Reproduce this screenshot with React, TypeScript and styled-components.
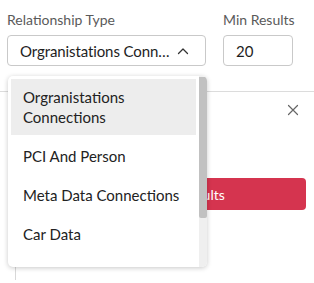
import React from "react";
import styled, { createGlobalStyle } from "styled-components";

const GlobalStyle = createGlobalStyle`
  html, body {
    margin: 0;
    padding: 0;
    background: #ffffff;
    font-family: Lato, "Noto Sans", sans-serif;
    color: #222;
  }
`;

const options = [
  "Orgranistations Connections",
  "PCI And Person",
  "Meta Data Connections",
  "Car Data",
];

const ChevronUp = () => (
  <svg width="14" height="14" viewBox="0 0 14 14" fill="none">
    <path d="M2.5 9.5 L7 5 L11.5 9.5" stroke="#333" strokeWidth="1.3" strokeLinecap="round" strokeLinejoin="round" />
  </svg>
);

const CloseIcon = () => (
  <svg width="12" height="12" viewBox="0 0 12 12" fill="none">
    <path d="M1.5 1.5 L10.5 10.5 M10.5 1.5 L1.5 10.5" stroke="#666" strokeWidth="1.2" strokeLinecap="round" />
  </svg>
);

const App: React.FC = () => {
  const [active] = React.useState(0);

  return (
    <>
      <GlobalStyle />
      <PageStyled>
        <FilterRowStyled>
          <FieldStyled>
            <LabelStyled>Relationship Type</LabelStyled>
            <SelectStyled>
              <SelectValueStyled>{options[0]}</SelectValueStyled>
              <ChevronUp />
            </SelectStyled>
            <MenuStyled>
              <MenuListStyled>
                {options.map((opt, i) => (
                  <MenuItemStyled key={opt} $active={i === active}>
                    {opt}
                  </MenuItemStyled>
                ))}
              </MenuListStyled>
              <ScrollTrackStyled>
                <ScrollThumbStyled />
              </ScrollTrackStyled>
            </MenuStyled>
          </FieldStyled>
          <FieldStyled>
            <LabelStyled>Min Results</LabelStyled>
            <NumberBoxStyled>20</NumberBoxStyled>
          </FieldStyled>
        </FilterRowStyled>
        <PanelStyled>
          <PanelHeaderStyled>
            <CloseButtonStyled>
              <CloseIcon />
            </CloseButtonStyled>
          </PanelHeaderStyled>
          <ActionButtonStyled>Show All Results</ActionButtonStyled>
          <TreeLineStyled />
        </PanelStyled>
      </PageStyled>
    </>
  );
};

export default App;

const PageStyled = styled.div`
  width: 314px;
  height: 283px;
  overflow: hidden;
  position: relative;
`;

const FilterRowStyled = styled.div`
  display: flex;
  gap: 17px;
  padding: 10px 0 0 7px;
`;

const FieldStyled = styled.div`
  display: flex;
  flex-direction: column;
  gap: 5px;
  position: relative;
`;

const LabelStyled = styled.div`
  font-size: 14px;
  line-height: 20px;
  color: #5a5a5a;
`;

const SelectStyled = styled.div`
  width: 199px;
  height: 31px;
  box-sizing: border-box;
  border: 1px solid #c9c9c9;
  border-radius: 4px;
  display: flex;
  align-items: center;
  gap: 6px;
  padding: 0 15px 0 12px;

  svg {
    flex-shrink: 0;
  }
`;

const SelectValueStyled = styled.span`
  flex: 1;
  min-width: 0;
  white-space: nowrap;
  overflow: hidden;
  text-overflow: ellipsis;
  font-size: 15px;
  line-height: 20px;
  letter-spacing: -0.1px;
  color: #1e1e1e;
`;

const NumberBoxStyled = styled.div`
  width: 70px;
  height: 31px;
  box-sizing: border-box;
  border: 1px solid #c9c9c9;
  border-radius: 4px;
  display: flex;
  align-items: center;
  padding: 0 12px;
  font-size: 15px;
  color: #1e1e1e;
`;

const MenuStyled = styled.div`
  position: absolute;
  top: 66px;
  left: 1px;
  width: 199px;
  height: 191px;
  background: #fff;
  border-radius: 5px;
  box-shadow: 0 1px 5px rgba(0, 0, 0, 0.22);
  display: flex;
  overflow: hidden;
  z-index: 10;
`;

const MenuListStyled = styled.div`
  flex: 1;
  min-width: 0;
  padding: 3px 3px 0 3px;
  display: flex;
  flex-direction: column;
  gap: 3px;
`;

const MenuItemStyled = styled.div<{ $active: boolean }>`
  padding: 8px 6px 8px 12px;
  font-size: 15px;
  line-height: 20px;
  color: #222;
  background: ${(p) => (p.$active ? "#ededed" : "transparent")};
`;

const ScrollTrackStyled = styled.div`
  width: 8px;
  flex-shrink: 0;
  background: #efefef;
  padding-top: 1px;
`;

const ScrollThumbStyled = styled.div`
  height: 141px;
  background: #c1c1c1;
  border-radius: 0 0 2px 2px;
`;

const PanelStyled = styled.div`
  margin-top: 25px;
  border-top: 1px solid #dcdcdc;
  display: flex;
  flex-direction: column;
  position: relative;
`;

const PanelHeaderStyled = styled.div`
  display: flex;
  justify-content: flex-end;
  padding: 12px 15px 0 0;
`;

const CloseButtonStyled = styled.div`
  width: 12px;
  height: 12px;
  display: flex;
`;

const ActionButtonStyled = styled.div`
  margin: 62px 8px 0 31px;
  padding-left: 12px;
  height: 32px;
  border-radius: 4px;
  background: #d5344f;
  color: #fff;
  font-size: 14px;
  display: flex;
  align-items: center;
  justify-content: center;
`;

const TreeLineStyled = styled.div`
  margin: 10px 0 0 15px;
  height: 60px;
  border-left: 1px solid #d8d8d8;
`;
